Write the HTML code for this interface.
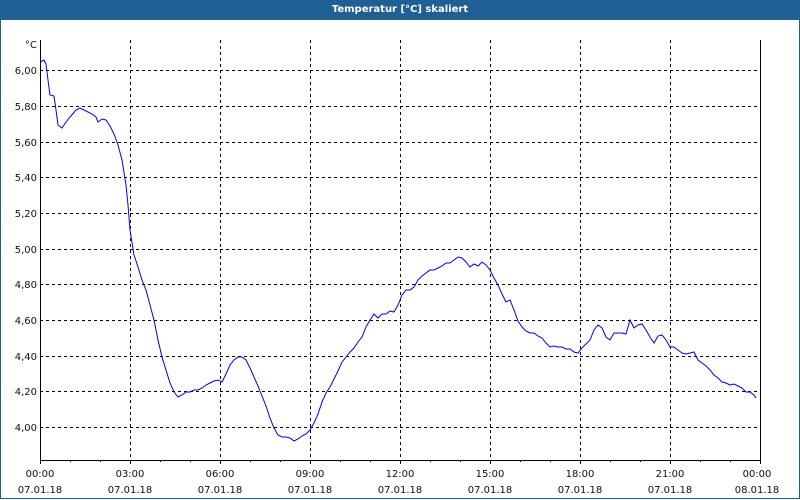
<!DOCTYPE html>
<html><head><style>
html,body{margin:0;padding:0;width:800px;height:500px;overflow:hidden;background:#fff;font-family:"DejaVu Sans","Liberation Sans",sans-serif;}
#t{position:absolute;left:0;top:0;width:800px;height:20px;background:#1e5f94;color:#fff;font-weight:bold;font-size:10px;text-align:center;line-height:19px;}
#f{position:absolute;left:0;top:20px;width:798px;height:478px;border:1px solid #1e5f94;border-top:none;}
svg{position:absolute;left:0;top:0}
text{font-family:"DejaVu Sans","Liberation Sans",sans-serif;font-size:10px;fill:#111}
</style></head><body>
<div id="t">Temperatur [°C] skaliert</div>
<div id="f"></div>
<svg width="800" height="500">
<g stroke="#000" stroke-width="1" stroke-dasharray="3,3" fill="none">
<path d="M40 70.5H760M40 106.5H760M40 142.5H760M40 177.5H760M40 213.5H760M40 249.5H760M40 284.5H760M40 320.5H760M40 356.5H760M40 391.5H760M40 427.5H760"/>
<path d="M130.5 40V460M220.5 40V460M310.5 40V460M400.5 40V460M490.5 40V460M580.5 40V460M670.5 40V460"/>
</g>
<g stroke="#000" stroke-width="1" fill="none">
<path d="M40.5 40V460.5H760.5V40"/>
<path d="M40.5 460v4M70.5 460v2M100.5 460v2M130.5 460v4M160.5 460v2M190.5 460v2M220.5 460v4M250.5 460v2M280.5 460v2M310.5 460v4M340.5 460v2M370.5 460v2M400.5 460v4M430.5 460v2M460.5 460v2M490.5 460v4M520.5 460v2M550.5 460v2M580.5 460v4M610.5 460v2M640.5 460v2M670.5 460v4M700.5 460v2M730.5 460v2M760.5 460v4"/>
</g>
<polyline fill="none" stroke="#0000ee" stroke-width="1" points="40,62 44,60 46,64 48,80 50,95 54,96 56,110 58,125 62,128 66,122 70,117 76,110 80,108 86,111 92,114 96,117 98,122 102,119 106,120 110,126 114,134 118,145 122,160 126,185 128,205 130,230 134,255 138,267 142,280 146,290 150,305 154,320 158,340 162,357 166,370 170,383 174,392 178,397 182,395 186,392 190,392 194,390 198,390 202,388 206,385 210,383 214,381 218,380 222,382 226,374 230,365 234,360 238,357 242,357 246,360 250,368 254,377 258,386 262,396 266,406 270,418 274,428 278,435 282,437 286,437 290,438 294,441 298,439 302,436 306,434 310,430 314,423 318,414 322,402 326,393 330,387 334,379 338,371 342,362 346,357 350,352 354,348 358,342 362,337 366,327 370,320 374,314 378,318 382,314 386,314 390,311 394,312 398,305 402,295 406,290 410,290 414,287 418,280 422,276 426,273 430,270 434,270 438,268 442,266 446,263 450,263 454,260 458,257 462,258 466,262 470,267 474,264 478,266 482,262 486,265 490,270 494,278 498,285 502,294 506,302 510,300 514,310 518,321 522,327 526,331 530,333 534,333 538,336 542,338 546,343 550,347 554,346 558,347 562,347 566,349 570,349 574,352 578,353 582,348 586,344 590,340 594,330 598,325 602,328 606,337 610,340 614,333 618,333 622,333 626,334 630,320 634,328 638,325 642,324 646,330 650,337 654,343 658,336 662,335 666,340 670,347 674,347 678,350 682,353 686,354 690,353 694,352 698,360 702,363 706,366 710,370 714,375 718,378 722,382 726,383 730,385 734,384 738,386 742,388 746,392 750,392 754,395 756,398"/>
<g text-anchor="end">
<text x="37" y="48">°C</text>
<text x="37" y="74">6,00</text><text x="37" y="110">5,80</text><text x="37" y="146">5,60</text><text x="37" y="181">5,40</text><text x="37" y="217">5,20</text><text x="37" y="253">5,00</text><text x="37" y="288">4,80</text><text x="37" y="324">4,60</text><text x="37" y="360">4,40</text><text x="37" y="395">4,20</text><text x="37" y="431">4,00</text>
</g>
<g text-anchor="middle">
<text x="40" y="477">00:00</text><text x="40" y="493">07.01.18</text>
<text x="130" y="477">03:00</text><text x="130" y="493">07.01.18</text>
<text x="220" y="477">06:00</text><text x="220" y="493">07.01.18</text>
<text x="310" y="477">09:00</text><text x="310" y="493">07.01.18</text>
<text x="400" y="477">12:00</text><text x="400" y="493">07.01.18</text>
<text x="490" y="477">15:00</text><text x="490" y="493">07.01.18</text>
<text x="580" y="477">18:00</text><text x="580" y="493">07.01.18</text>
<text x="670" y="477">21:00</text><text x="670" y="493">07.01.18</text>
<text x="757" y="477">00:00</text><text x="757" y="493">08.01.18</text>
</g>
</svg>
</body></html>
